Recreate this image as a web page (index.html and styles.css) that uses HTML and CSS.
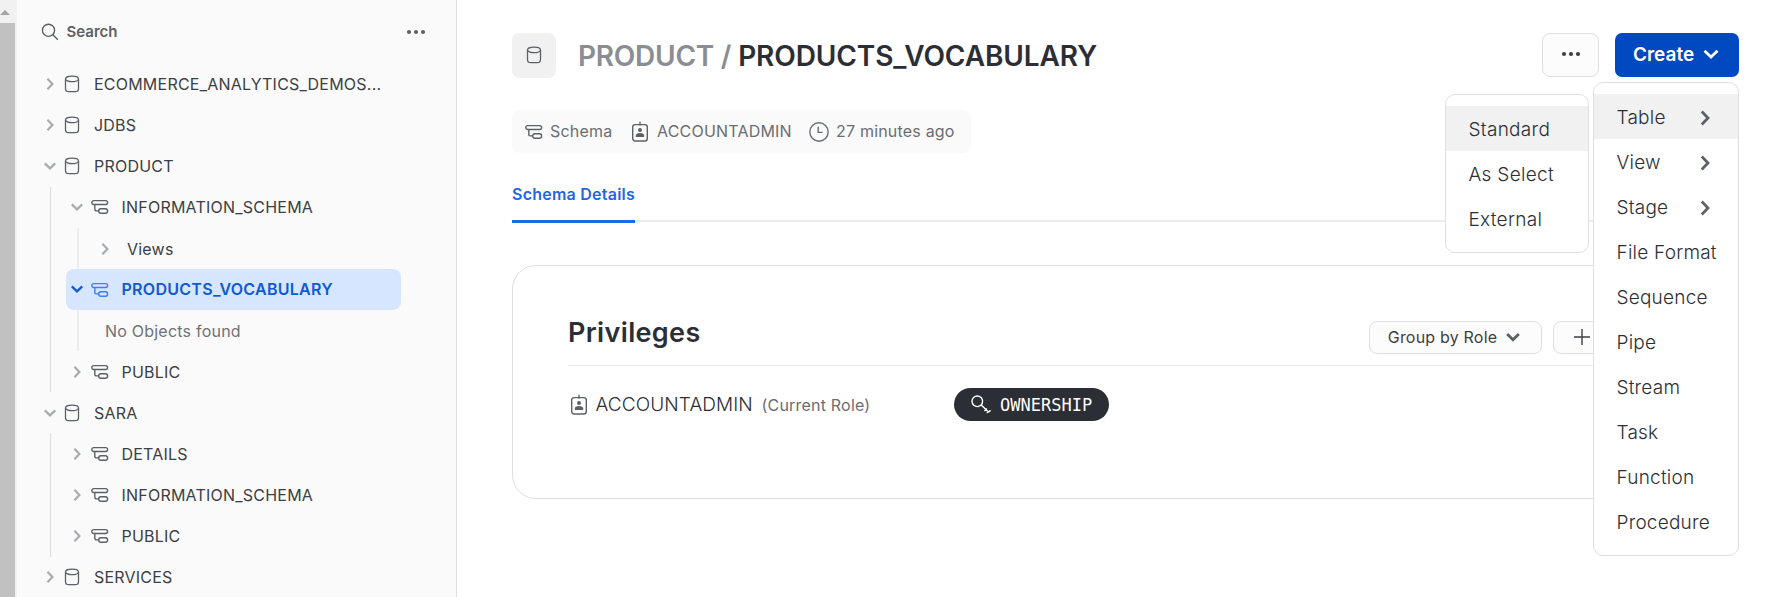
FILE: index.html
```html
<!DOCTYPE html>
<html lang="en">
<head>
<meta charset="utf-8">
<title>PRODUCT / PRODUCTS_VOCABULARY</title>
<link rel="stylesheet" href="styles.css">
</head>
<body>
<svg class="defs" width="0" height="0">
  <symbol id="right" viewBox="0 0 16 16"><path d="M5.4 2.8 10.4 8 5.4 13.2"/></symbol>
  <symbol id="down" viewBox="0 0 16 16"><path d="M2.8 5.4 8 10.4 13.2 5.4"/></symbol>
  <symbol id="db" viewBox="0 0 16 18"><ellipse cx="8" cy="3.9" rx="6.5" ry="2.7"/><path d="M1.5 3.9v9.6a3.2 3.2 0 0 0 3.2 3.2h6.6a3.2 3.2 0 0 0 3.2-3.2V3.9"/></symbol>
  <symbol id="schema" viewBox="0 0 18 16"><rect x=".8" y="1.6" width="15.8" height="3.9" rx="1.95"/><rect x="7.7" y="9.7" width="8.9" height="4.6" rx="2.2"/><path d="M3.8 5.5v4.4q0 2 2 2h1.9"/></symbol>
  <symbol id="badge" viewBox="0 0 18 22"><rect x="1.7" y="3.6" width="14.6" height="16.4" rx="2.5"/><path d="M9 .8v3.6"/><circle class="solid" cx="9" cy="9" r="2"/><path class="solid" d="M4.8 16v-1.2q0-2.8 4.2-2.8t4.2 2.8V16z"/></symbol>
  <symbol id="clock" viewBox="0 0 20 20"><circle cx="10" cy="10" r="9.2"/><path d="M9.2 4.8v5.6h4.4"/></symbol>
</svg>
<div class="app">
  <div class="scrollbar"><div class="scroll-arrow"></div><div class="scroll-thumb"></div></div>
  <aside class="sidebar">
    <div class="search">
      <svg class="i-search" viewBox="0 0 18 18"><circle cx="7.5" cy="7.3" r="6.1"/><path d="m11.9 11.7 5 5"/></svg>
      <span class="search-label">Search</span>
      <svg class="dots" viewBox="0 0 20 6"><circle cx="3" cy="3" r="2.1"/><circle cx="10" cy="3" r="2.1"/><circle cx="17" cy="3" r="2.1"/></svg>
    </div>
    <nav class="tree">
      <div class="row"><svg class="chev"><use href="#right"/></svg><svg class="i-db"><use href="#db"/></svg><span>ECOMMERCE_ANALYTICS_DEMOS...</span></div>
      <div class="row"><svg class="chev"><use href="#right"/></svg><svg class="i-db"><use href="#db"/></svg><span>JDBS</span></div>
      <div class="row"><svg class="chev"><use href="#down"/></svg><svg class="i-db"><use href="#db"/></svg><span>PRODUCT</span></div>
      <div class="group">
        <div class="row child"><svg class="chev"><use href="#down"/></svg><svg class="i-schema"><use href="#schema"/></svg><span>INFORMATION_SCHEMA</span></div>
        <div class="group inner">
          <div class="row leaf"><svg class="chev"><use href="#right"/></svg><span>Views</span></div>
        </div>
        <div class="row child selected"><svg class="chev"><use href="#down"/></svg><svg class="i-schema"><use href="#schema"/></svg><span>PRODUCTS_VOCABULARY</span></div>
        <div class="group inner">
          <div class="row empty"><span>No Objects found</span></div>
        </div>
        <div class="row child"><svg class="chev"><use href="#right"/></svg><svg class="i-schema"><use href="#schema"/></svg><span>PUBLIC</span></div>
      </div>
      <div class="row"><svg class="chev"><use href="#down"/></svg><svg class="i-db"><use href="#db"/></svg><span>SARA</span></div>
      <div class="group">
        <div class="row child"><svg class="chev"><use href="#right"/></svg><svg class="i-schema"><use href="#schema"/></svg><span>DETAILS</span></div>
        <div class="row child"><svg class="chev"><use href="#right"/></svg><svg class="i-schema"><use href="#schema"/></svg><span>INFORMATION_SCHEMA</span></div>
        <div class="row child"><svg class="chev"><use href="#right"/></svg><svg class="i-schema"><use href="#schema"/></svg><span>PUBLIC</span></div>
      </div>
      <div class="row"><svg class="chev"><use href="#right"/></svg><svg class="i-db"><use href="#db"/></svg><span>SERVICES</span></div>
    </nav>
  </aside>
  <main class="main">
    <header class="head">
      <div class="head-icon"><svg class="i-db"><use href="#db"/></svg></div>
      <h1 class="title"><span class="crumb">PRODUCT /</span> PRODUCTS_VOCABULARY</h1>
      <button class="btn more"><svg class="dots" viewBox="0 0 20 6"><circle cx="3" cy="3" r="2.1"/><circle cx="10" cy="3" r="2.1"/><circle cx="17" cy="3" r="2.1"/></svg></button>
      <div class="create-wrap">
        <button class="create"><span>Create</span><svg class="chev"><use href="#down"/></svg></button>
        <div class="menu create-menu">
          <div class="item active"><span>Table</span><svg class="chev"><use href="#right"/></svg></div>
          <div class="item"><span>View</span><svg class="chev"><use href="#right"/></svg></div>
          <div class="item"><span>Stage</span><svg class="chev"><use href="#right"/></svg></div>
          <div class="item">File Format</div>
          <div class="item">Sequence</div>
          <div class="item">Pipe</div>
          <div class="item">Stream</div>
          <div class="item">Task</div>
          <div class="item">Function</div>
          <div class="item">Procedure</div>
        </div>
        <div class="menu sub-menu">
          <div class="item active">Standard</div>
          <div class="item">As Select</div>
          <div class="item">External</div>
        </div>
      </div>
    </header>
    <div class="meta">
      <svg class="i-schema"><use href="#schema"/></svg><span class="m-schema">Schema</span>
      <svg class="i-badge"><use href="#badge"/></svg><span class="m-role">ACCOUNTADMIN</span>
      <svg class="i-clock"><use href="#clock"/></svg><span class="m-time">27 minutes ago</span>
    </div>
    <div class="tabs"><div class="tab">Schema Details</div></div>
    <section class="card">
      <div class="card-head">
        <h2>Privileges</h2>
        <button class="btn small group-by"><span>Group by Role</span><svg class="chev"><use href="#down"/></svg></button>
        <button class="btn small add"><svg class="i-plus" viewBox="0 0 16 16"><path d="M8 0v16M0 8h16"/></svg></button>
      </div>
      <div class="priv">
        <div class="role"><svg class="i-badge"><use href="#badge"/></svg><span class="role-name">ACCOUNTADMIN</span><span class="note">(Current Role)</span></div>
        <div class="owner"><svg class="i-key" viewBox="0 0 20 20"><circle cx="6.3" cy="6.3" r="5.3"/><path d="m10.2 10.1 6.6 6.2M13.2 15.6l2-.5.2-1.9M15.6 17.4q1.6.4 2-.8 1.6.2 1.5-1.6"/></svg><span>OWNERSHIP</span></div>
      </div>
    </section>
  </main>
</div>
</body>
</html>
```
FILE: styles.css
```css
* { box-sizing: border-box; }
body { margin: 0; font-family: Inter, "Liberation Sans", sans-serif; color: #2b2e34; background: #fff; }
.defs { position: absolute; }
svg { flex: none; fill: none; stroke: currentColor; stroke-width: 1.4; }
.solid { fill: currentColor; stroke: none; }
.app { display: flex; width: 1778px; height: 597px; overflow: hidden; }

.scrollbar { width: 17px; background: #f1f1f1; }
.scroll-arrow { width: 10px; height: 15px; border: 5px solid transparent; border-top-width: 10px; border-bottom-color: #a3a3a3; margin-bottom: 8px; }
.scroll-thumb { width: 15px; height: 574px; background: #c1c1c1; }

.sidebar { width: 440px; background: #fafafa; border-right: 1px solid #dedfe1; color: #3c3f45; }
.search { display: flex; align-items: center; height: 63.6px; padding: 0 30px 0 24px; color: #5d6066; }
.i-search { width: 18px; height: 18px; }
.search-label { flex: 1; margin-left: 7.5px; font-size: 15px; font-weight: 600; }
.dots { width: 20px; height: 6px; fill: currentColor; stroke: none; }

.tree { padding-left: 25px; font-size: 16px; letter-spacing: 0.22px; white-space: nowrap; }
.row { display: flex; align-items: center; height: 41.1px; }
.chev { width: 16px; height: 16px; stroke-width: 2.2; }
.row .chev { color: #a8abaf; }
.i-db { width: 16px; height: 18px; margin: 0 14px 0 6px; color: #5d6066; stroke-width: 1.3; }
.i-schema { width: 18px; height: 16px; color: #5d6066; stroke-width: 1.4; }
.group { margin-left: 8px; border-left: 1px solid #dcdde0; }
.child { width: 335px; margin-left: 15px; padding-left: 3px; }
.child .i-schema { margin: 0 12.5px 0 6px; }
.inner { margin-left: 26px; border-left: 2px solid #ececed; }
.leaf { padding-left: 18px; }
.leaf span { margin-left: 14px; }
.empty { padding-left: 26px; color: #6f7277; }
.selected { background: #d6e6ff; border-radius: 8px; color: #1059d4; font-weight: 600; letter-spacing: 0.28px; }
.selected span { margin-top: -2px; }
.selected .chev { margin-top: -2px; color: #1059d4; }
.selected .i-schema { color: #3b82f6; }

.main { flex: 1; min-width: 0; padding: 33px 39px 0 55px; }
.head { display: flex; align-items: flex-start; height: 45px; }
.head-icon { display: flex; align-items: center; justify-content: center; width: 44px; height: 45px; padding-bottom: 1px; border-radius: 7px; background: #f1f1f1; }
.head-icon .i-db { margin: 0; }
.title { flex: 1; margin: 0 0 0 22px; font-size: 28px; font-weight: 600; line-height: 46px; letter-spacing: -0.1px; white-space: nowrap; }
.crumb { color: #8a8d93; letter-spacing: -0.25px; }
.btn { display: flex; align-items: center; justify-content: center; padding: 0; border: 1px solid #dedfe1; border-radius: 8px; background: #fcfcfc; color: #3c3f45; font-family: inherit; }
.more { width: 57px; height: 44px; margin-right: 16px; padding-bottom: 2px; }
.create-wrap { position: relative; }
.create { display: flex; align-items: center; width: 124px; height: 44px; padding: 0 0 2px 18px; border: 0; border-radius: 7px; background: #0149c0; color: #fff; font: 600 19px Inter, sans-serif; }
.create .chev { width: 20px; height: 20px; margin-left: 7px; }

.menu { position: absolute; border: 1px solid #dedfe1; border-radius: 10px; background: #fff; padding-top: 11px; font-size: 19px; font-weight: 300; letter-spacing: 0.22px; }
.create-menu { top: 49px; right: 0; width: 146px; height: 474px; }
.sub-menu { top: 61px; right: 150px; width: 144px; height: 159px; letter-spacing: 0.3px; }
.item { display: flex; align-items: center; justify-content: space-between; height: 45px; padding: 2px 23px 0 22.5px; white-space: nowrap; }
.item .chev { width: 20px; height: 20px; color: #5d6066; }
.active { background: #f1f1f1; }

.meta { display: flex; align-items: center; width: 459px; height: 43px; margin-top: 32px; padding-left: 13px; border-radius: 8px; background: #fafafa; color: #6a6d73; font-size: 16px; letter-spacing: 0.2px; white-space: nowrap; }
.meta span { margin-top: -1px; }
.m-schema { margin-left: 7px; width: 81px; }
.i-badge { width: 18px; height: 22px; color: #5d6066; }
.m-role { margin-left: 8px; width: 152px; }
.i-clock { width: 20px; height: 20px; }
.m-time { margin-left: 7px; }

.tabs { height: 69px; border-bottom: 2px solid #ececed; }
.tab { width: 123px; height: 70px; padding-top: 31px; border-bottom: 3px solid #1f6ae8; color: #1f66e0; font-size: 16px; font-weight: 600; letter-spacing: 0.24px; white-space: nowrap; }

.card { height: 234px; margin-top: 43px; padding: 0 0 0 55px; border: 1px solid #dedfe1; border-radius: 24px; }
.card-head { display: flex; height: 100px; padding-top: 55px; border-bottom: 1px solid #ececed; }
.card h2 { flex: 1; margin: -5px 0 0; font-size: 27px; font-weight: 600; line-height: 33px; letter-spacing: 0.35px; }
.small { height: 33px; font-size: 16px; letter-spacing: 0.2px; }
.group-by { width: 173px; margin-right: 11px; padding: 0 1px 2px 0; }
.group-by .chev { width: 18px; height: 18px; margin-left: 7px; color: #5d6066; stroke-width: 2.5; }
.add { width: 185px; justify-content: flex-start; padding: 0 0 2px 20px; }
.i-plus { width: 16px; height: 16px; }
.priv { display: flex; align-items: center; height: 77px; }
.role { display: flex; align-items: center; width: 386px; padding-left: 2px; white-space: nowrap; }
.role-name { width: 166px; margin-left: 7.5px; font-size: 19px; font-weight: 300; letter-spacing: 0.1px; }
.note { color: #6a6d73; font-size: 16px; letter-spacing: 0.2px; }
.owner { display: flex; align-items: center; width: 155px; height: 33px; padding-left: 17px; border-radius: 17px; background: #2b2e34; color: #fff; font: 17px "DejaVu Sans Mono", monospace; }
.i-key { width: 20px; height: 20px; margin-right: 9px; }
```
